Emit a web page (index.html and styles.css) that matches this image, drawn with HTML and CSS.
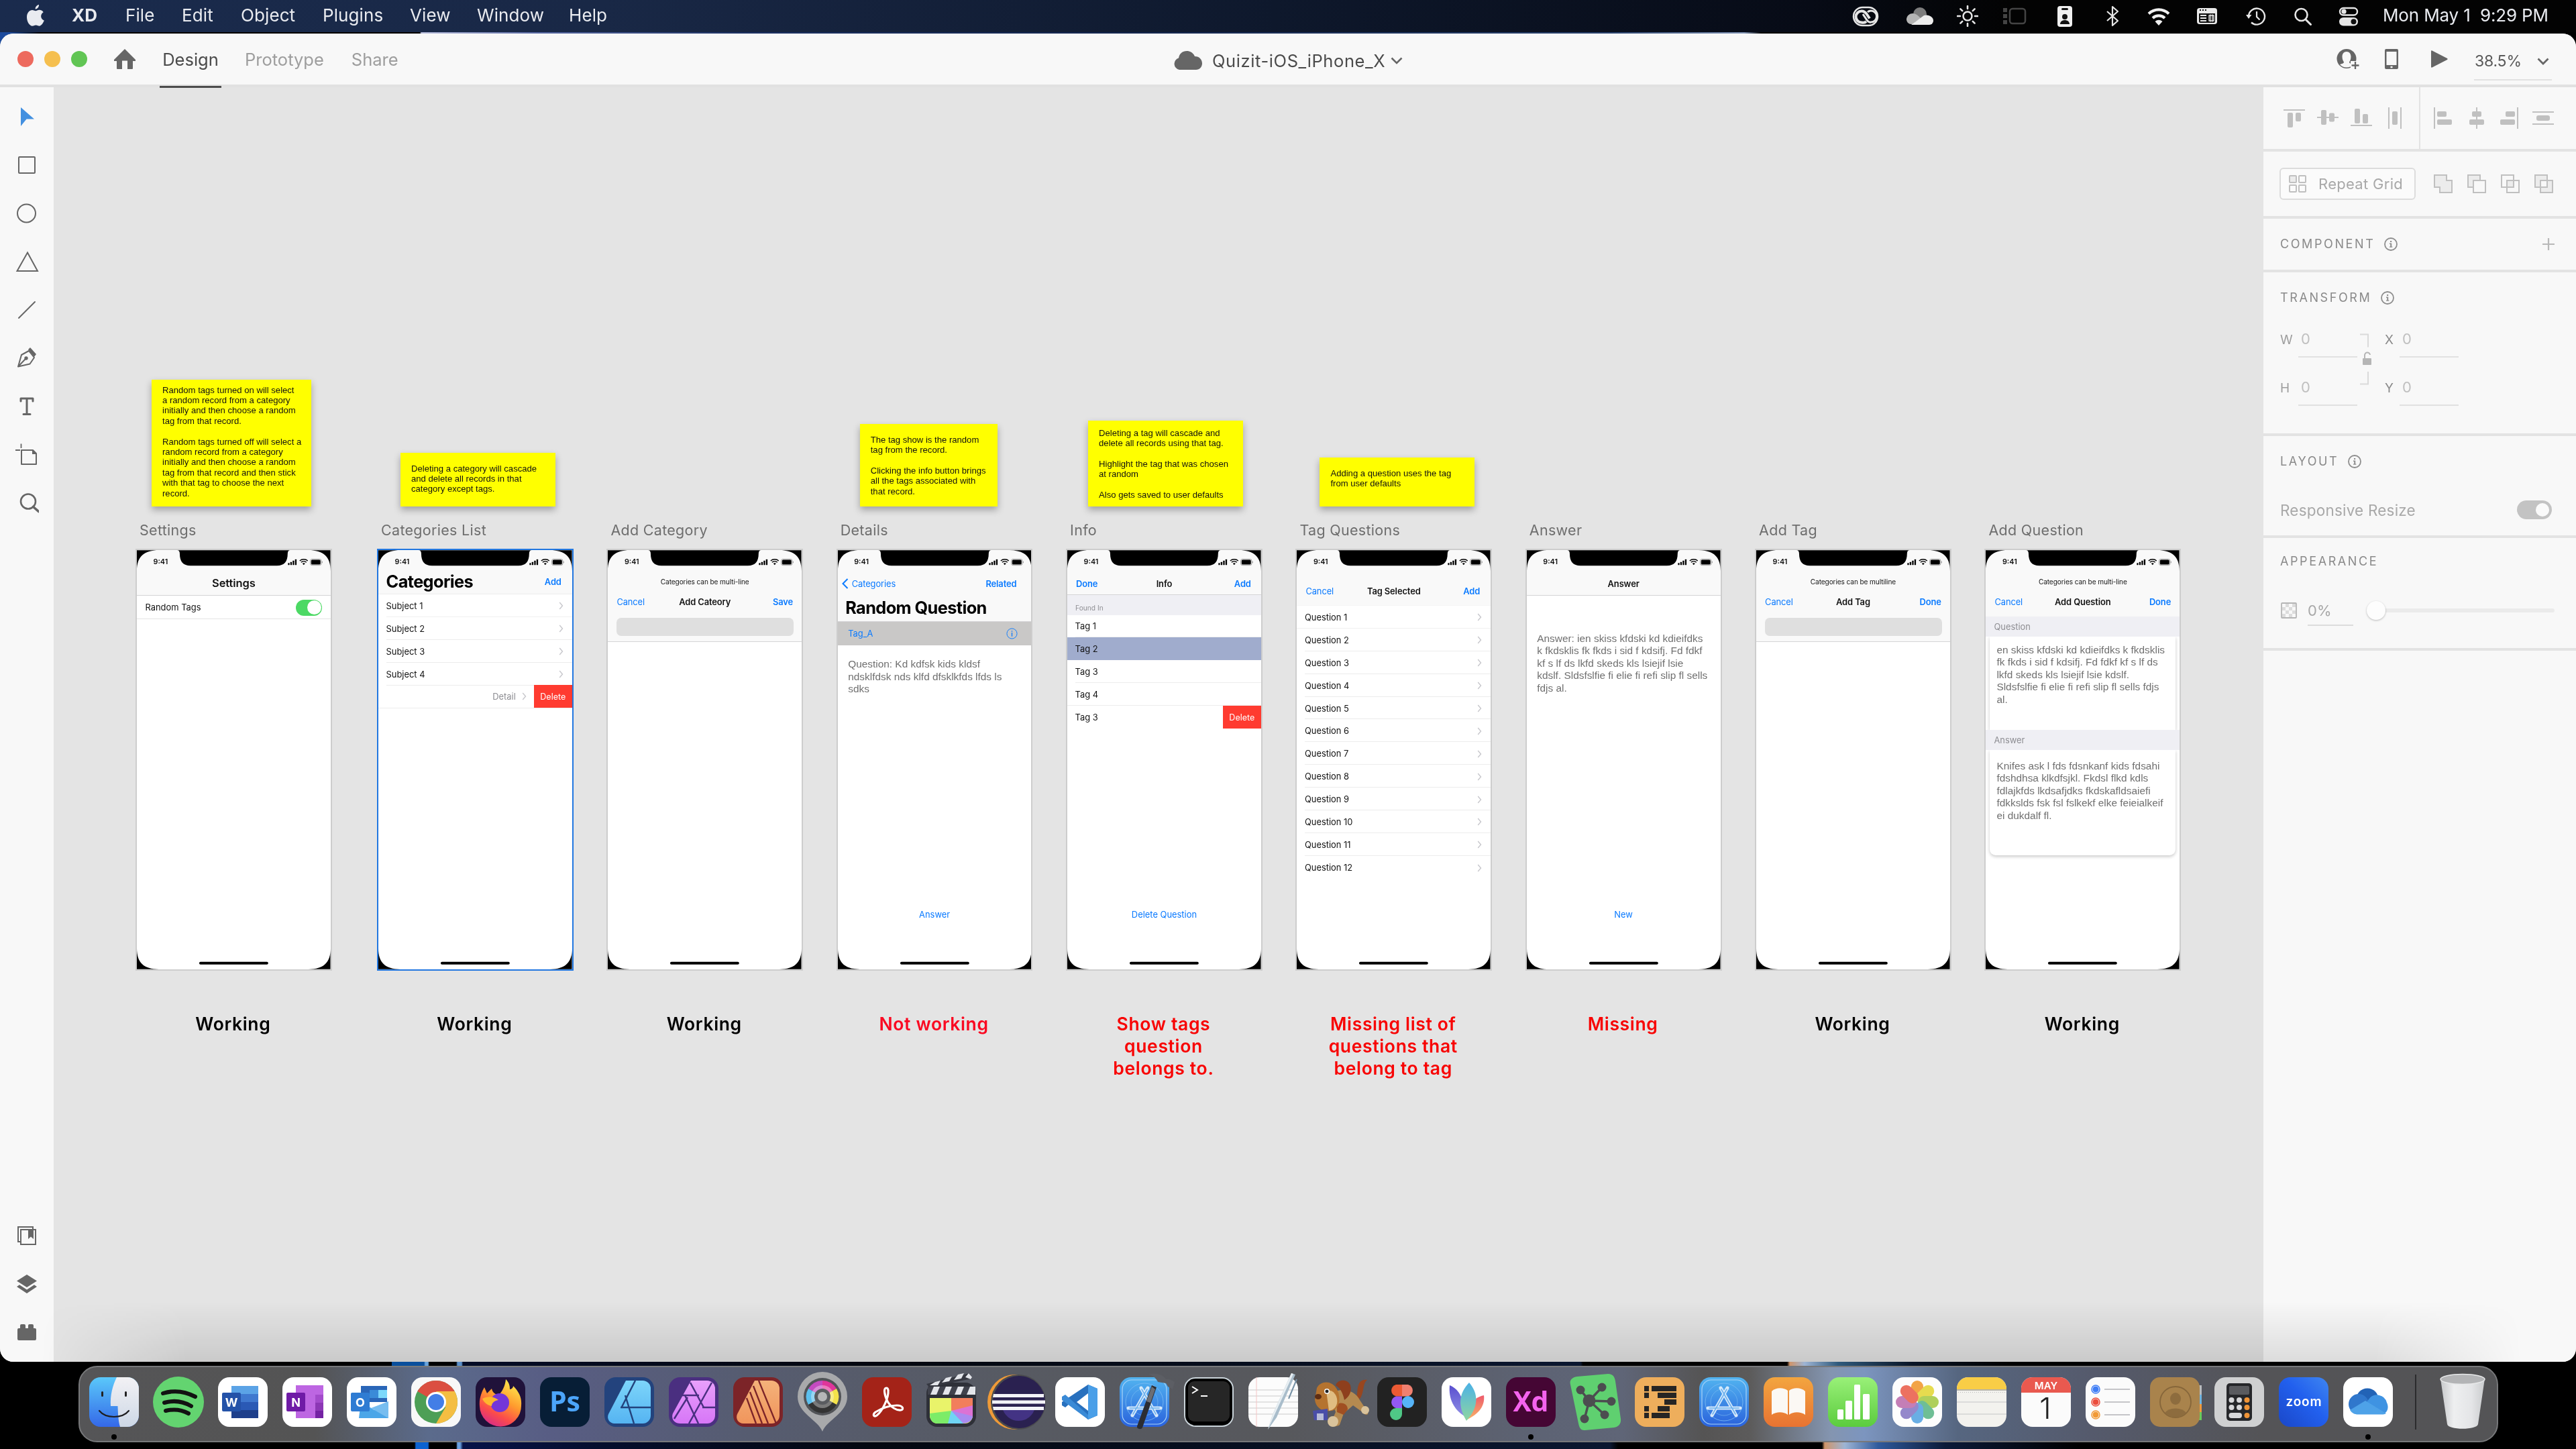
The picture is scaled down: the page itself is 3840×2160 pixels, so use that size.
FILE: index.html
```html
<!DOCTYPE html>
<html lang="en">
<head>
<meta charset="utf-8">
<title>Quizit-iOS_iPhone_X</title>
<link rel="stylesheet" href="styles.css">
</head>
<body>
<svg class="defs" width="0" height="0" aria-hidden="true">
  <defs>
    <linearGradient id="gBlue" x1="0" y1="0" x2="0" y2="1"><stop offset="0" stop-color="#5ac8fa"/><stop offset="1" stop-color="#3468e8"/></linearGradient>
    <linearGradient id="gStore" x1="0" y1="0" x2="0" y2="1"><stop offset="0" stop-color="#52b4f0"/><stop offset="1" stop-color="#2a62dc"/></linearGradient>
    <linearGradient id="gFace" x1="0" y1="0" x2="0" y2="1"><stop offset="0" stop-color="#f2f1f4"/><stop offset="1" stop-color="#cdd8e6"/></linearGradient>
    <linearGradient id="gFox" x1="0.8" y1="0" x2="0.3" y2="1"><stop offset="0" stop-color="#fff14f"/><stop offset="0.45" stop-color="#ff9a2e"/><stop offset="0.75" stop-color="#fb4b4b"/><stop offset="1" stop-color="#d62c88"/></linearGradient>
    <linearGradient id="gDesigner" x1="0" y1="0" x2="0" y2="1"><stop offset="0" stop-color="#7dd5fa"/><stop offset="1" stop-color="#55b4f2"/></linearGradient>
    <linearGradient id="gPhoto" x1="0" y1="0" x2="0" y2="1"><stop offset="0" stop-color="#e8a0fb"/><stop offset="1" stop-color="#d776f7"/></linearGradient>
    <linearGradient id="gPublish" x1="0" y1="0" x2="0" y2="1"><stop offset="0" stop-color="#f4b27a"/><stop offset="1" stop-color="#f0955c"/></linearGradient>
    <linearGradient id="gBooks" x1="0" y1="0" x2="0" y2="1"><stop offset="0" stop-color="#f3a53f"/><stop offset="1" stop-color="#e87332"/></linearGradient>
    <linearGradient id="gNumbers" x1="0" y1="0" x2="0" y2="1"><stop offset="0" stop-color="#99f078"/><stop offset="1" stop-color="#5bcc3e"/></linearGradient>
    <linearGradient id="gZoom" x1="1" y1="0" x2="0" y2="1"><stop offset="0" stop-color="#3f86f0"/><stop offset="0.45" stop-color="#2260ee"/><stop offset="1" stop-color="#1a47c8"/></linearGradient>
    <linearGradient id="gTrash" x1="0" y1="0" x2="1" y2="0"><stop offset="0" stop-color="#c6c8ca"/><stop offset="0.3" stop-color="#eeeff0"/><stop offset="0.7" stop-color="#e4e5e7"/><stop offset="1" stop-color="#c9cbcd"/></linearGradient>
    <linearGradient id="gPlant" x1="0" y1="0" x2="0" y2="1"><stop offset="0" stop-color="#4bb1e6"/><stop offset="1" stop-color="#8fd6a0"/></linearGradient>
    <linearGradient id="gPetalL" x1="0" y1="0" x2="0" y2="1"><stop offset="0" stop-color="#5a4fcf"/><stop offset="1" stop-color="#8f8ee6"/></linearGradient>
    <linearGradient id="gPetalR" x1="0" y1="0" x2="0" y2="1"><stop offset="0" stop-color="#ee5a6c"/><stop offset="1" stop-color="#f7b267"/></linearGradient>
    <symbol id="frame" viewBox="0 0 289 625">
      <path fill="#000" fill-rule="evenodd" d="M0 0H289V625H0ZM0 31V594C0 615 10 625 33 625H256C279 625 289 615 289 594V31C289 9 278 0 256 0H229Q225 0 225 5C225 17 220 23 209 23H80C69 23 64 17 64 5Q64 0 60 0H33C11 0 0 9 0 31Z"/>
      <rect x="93" y="614" width="103" height="4" rx="2" fill="#000"/>
      <g fill="#000">
        <rect x="225.500" y="19" width="2.300" height="3" rx=".6"/><rect x="229" y="17.500" width="2.300" height="4.500" rx=".6"/><rect x="232.500" y="15.500" width="2.300" height="6.500" rx=".6"/><rect x="236" y="13.500" width="2.300" height="8.500" rx=".6"/>
        <rect x="260" y="14.300" width="14" height="7" rx="1.500"/>
        <path d="M249 22l-2-2.200a3 3 0 0 1 4 0z"/>
      </g>
      <g fill="none" stroke="#000" stroke-width="1.500"><path d="M245 18a6 6 0 0 1 8 0"/><path d="M243 15.800a9 9 0 0 1 12 0"/></g>
      <rect x="258.800" y="13.200" width="16.400" height="9.200" rx="2.500" fill="none" stroke="#9a9a9a" stroke-width=".9"/>
      <path d="M276.500 16.500v2.600" stroke="#9a9a9a" stroke-width="1.200"/>
    </symbol>
    <symbol id="chev" viewBox="0 0 7 12"><path d="M1.200 1l4.300 5-4.300 5" fill="none" stroke="#c7c7cc" stroke-width="1.400"/></symbol>
    <symbol id="info" viewBox="0 0 20 20"><circle cx="10" cy="10" r="9" fill="none" stroke="#8e8e8e" stroke-width="1.800"/><path d="M9 5h2.200v2H9zM8 8.500h3.200v5H12.300v1.300H8v-1.300h1.200v-3.600H8z" fill="#8e8e8e"/></symbol>
    <symbol id="storeA" viewBox="0 0 74 74">
      <rect width="74" height="74" rx="17" fill="url(#gStore)"/>
      <rect x="4" y="4" width="66" height="66" rx="14" fill="none" stroke="#a9d4f8" stroke-width="1.200"/>
      <circle cx="37" cy="37" r="28" fill="none" stroke="#7dbdf2" stroke-width=".8"/><circle cx="37" cy="37" r="20" fill="none" stroke="#7dbdf2" stroke-width=".6"/>
      <g stroke="#e4f2fd" stroke-width="5" stroke-linecap="round" opacity=".92"><path d="M32 16L55 57M42 16L19 57M13 46H61"/></g>
      <g stroke="#6fb2ee" stroke-width="1.600" stroke-linecap="round"><path d="M33 18L54 55M41 18L20 55M15 46H59"/></g>
    </symbol>
  </defs>
</svg>

<header class="menubar">
  <nav class="menus">
    <svg class="apple" viewBox="0 0 26 32"><path fill="#e9ebf0" d="M18 0c.4 3-2.300 6.600-5.300 6.600C12.300 3.500 15.200.4 18 0zM13.200 9.300c1.300 0 3-1.500 5.500-1.500 2 0 4.600 1 6 3.400-5.300 3.200-4.400 10.200 1.100 12.400-1.400 3.700-4.300 8.100-7 8.100-2 0-2.800-1.300-5.300-1.300s-3.400 1.300-5.300 1.300C4 31.700 0 25.300 0 18.500 0 11.700 4.200 8 8 8c2.300 0 4 1.300 5.200 1.300z"/></svg>
    <b>XD</b><span>File</span><span>Edit</span><span>Object</span><span>Plugins</span><span>View</span><span>Window</span><span>Help</span>
  </nav>
  <div class="tray">
    <svg viewBox="0 0 40 32"><rect x="2" y="3" width="36" height="27" rx="13.500" fill="none" stroke="#e6e6e6" stroke-width="2.500"/><path d="M21 24c-2 2-5 2-7 1.500a8.500 8.500 0 0 1 0-17c4 0 6 2 8 5l4 6" fill="none" stroke="#e6e6e6" stroke-width="4"/><path d="M16 13l6 9c2 3 4 3.500 6 3a8.500 8.500 0 0 0 0-17c-2 0-4 1-5 2" fill="none" stroke="#e6e6e6" stroke-width="3"/></svg>
    <svg viewBox="0 0 40 32"><circle cx="20" cy="13" r="10" fill="#7d7d7d"/><path d="M0 22a9 9 0 0 1 9-10c5 0 8 3 12 7l-12 9H8a8 8 0 0 1-8-6z" fill="#b5b5b5"/><path d="M7 29L26 15c7-2 14 2 14 8a6 6 0 0 1-6 6z" fill="#ededed"/></svg>
    <svg viewBox="0 0 32 32"><circle cx="16" cy="16" r="6.500" fill="none" stroke="#e6e6e6" stroke-width="2.500"/><path d="M16 1v4M16 27v4M1 16h4M27 16h4M5.400 5.400l2.800 2.800M23.800 23.800l2.800 2.800M5.400 26.600l2.800-2.800M23.800 8.200l2.800-2.800" stroke="#e6e6e6" stroke-width="2.600" stroke-linecap="round"/></svg>
    <svg viewBox="0 0 36 32"><rect x="11" y="5" width="23" height="22" rx="4" fill="none" stroke="#444" stroke-width="2.500"/><path d="M1 4h6v6H1zM1 13h6v6H1zM1 22h6v6H1z" fill="#444"/></svg>
    <svg viewBox="0 0 22 32"><rect width="22" height="31" y="1" rx="4" fill="#f0f0f0"/><rect x="6" y="4" width="10" height="3" rx="1.500" fill="#111"/><circle cx="11" cy="17" r="4" fill="#111"/><path d="M4 28c0-8 14-8 14 0z" fill="#111"/></svg>
    <svg viewBox="0 0 20 32"><path d="M2 9l16 14-8 7V2l8 7L2 23" fill="none" stroke="#e6e6e6" stroke-width="2.200" stroke-linejoin="round"/></svg>
    <svg viewBox="0 0 34 32"><path d="M2 12.500a21.500 21.500 0 0 1 30 0M8 19a13 13 0 0 1 18 0" fill="none" stroke="#f0f0f0" stroke-width="4.200"/><path d="M17 30l-5.500-6a8 8 0 0 1 11 0z" fill="#f0f0f0"/></svg>
    <svg viewBox="0 0 30 32"><rect y="4" width="30" height="24" rx="4" fill="#e9e9e9"/><path d="M3 12h24v12a2 2 0 0 1-2 2H5a2 2 0 0 1-2-2z" fill="#111"/><path d="M4 7h2M8 7h2M12 7h2" stroke="#111" stroke-width="2.200"/><path d="M5 15h9M5 19h9M5 23h9" stroke="#e9e9e9" stroke-width="2"/><path d="M18 15h7v8h-7zM20 13.500v11M23 13.500v11" fill="none" stroke="#e9e9e9" stroke-width="1.300"/></svg>
    <svg viewBox="0 0 30 32"><path d="M4 17a12 12 0 1 1 4 8.500" fill="none" stroke="#e6e6e6" stroke-width="2.400"/><path d="M0 14h8.500L4 20z" fill="#e6e6e6"/><path d="M16 9v8l4.500 4.500" fill="none" stroke="#e6e6e6" stroke-width="2.200"/></svg>
    <svg viewBox="0 0 26 32"><circle cx="10.500" cy="14" r="9" fill="none" stroke="#e6e6e6" stroke-width="2.600"/><path d="M17 21l7.500 7.500" stroke="#e6e6e6" stroke-width="3" stroke-linecap="round"/></svg>
    <svg viewBox="0 0 30 32"><rect x="2" y="4" width="26" height="10.500" rx="5.200" fill="none" stroke="#e6e6e6" stroke-width="2.400"/><circle cx="8" cy="9.200" r="3.600" fill="#e6e6e6"/><rect x="1" y="18" width="28" height="12.500" rx="6.200" fill="#e6e6e6"/><circle cx="22.500" cy="24.200" r="4" fill="#111"/></svg>
    <span class="clock">Mon May 1&nbsp; 9:29 PM</span>
  </div>
</header>

<main class="window">
  <div class="titlebar">
    <div class="lights"><i class="close"></i><i class="min"></i><i class="max"></i></div>
    <svg class="home" viewBox="0 0 32 30"><path d="M16 0L32 16V18H28V29a1 1 0 0 1-1 1H20V17.500H12V30H5a1 1 0 0 1-1-1V18H0V16z" fill="#666"/></svg>
    <div class="tabs"><span class="on">Design</span><span>Prototype</span><span>Share</span></div>
    <div class="doc">
      <svg width="44" height="30" viewBox="0 0 44 30"><path d="M9 29a9 9 0 0 1-1-17.500C9 5 14 1 20 1c6 0 10 3.500 12 8 7 0 11 5 11 10.500C43 25 39 29 34 29z" fill="#666"/></svg>
      <span>Quizit-iOS_iPhone_X</span>
      <svg width="18" height="11" viewBox="0 0 18 11"><path d="M1.500 1.500L9 9l7.500-7.500" fill="none" stroke="#666" stroke-width="2.600"/></svg>
    </div>
    <div class="actions">
      <svg width="34" height="32" viewBox="0 0 34 32"><circle cx="15" cy="15.500" r="14.500" fill="#666"/><path d="M15 5c4 0 6.500 3 6.500 7.500 0 4-1.500 6.500-2.500 8 0 2 3 2.500 6 3.500-5 6-15 6-20 0 3-1 6-1.500 6-3.500-1-1.500-2.500-4-2.500-8C8.500 8 11 5 15 5z" fill="#f8f8f8"/><path d="M21 19h13v13H21z" fill="#f8f8f8"/><path d="M28 20v11M22.500 25.500h11" stroke="#666" stroke-width="2.300"/></svg>
      <svg width="20" height="32" viewBox="0 0 20 32"><path fill="#666" fill-rule="evenodd" d="M2 1h16a2 2 0 0 1 2 2v26a2 2 0 0 1-2 2H2a2 2 0 0 1-2-2V3a2 2 0 0 1 2-2zM2.500 5v20h15V5zM8.500 26.800v2.400h3v-2.400z"/></svg>
      <svg width="26" height="28" viewBox="0 0 26 28"><path d="M0 2.500Q0 .8 1.600 1.600L24 13q1.500 1 0 2L1.600 26.400Q0 27.200 0 25.500z" fill="#666"/></svg>
      <div class="zoomer"><span>38.5%</span><svg width="18" height="11" viewBox="0 0 18 11"><path d="M1.500 1.500L9 9l7.500-7.500" fill="none" stroke="#666" stroke-width="2.800"/></svg></div>
    </div>
  </div>

  <div class="work">
    <aside class="tools">
      <div class="toolset">
        <svg viewBox="0 0 36 36"><path d="M9 4l20 17.500H17.500L9 32z" fill="#4390e0"/></svg>
        <svg viewBox="0 0 36 36"><rect x="6" y="6" width="24" height="24" rx="1" fill="none" stroke="#666" stroke-width="2"/></svg>
        <svg viewBox="0 0 36 36"><circle cx="17.500" cy="18" r="13.500" fill="none" stroke="#666" stroke-width="2"/></svg>
        <svg viewBox="0 0 36 36"><path d="M19 4.500L34 32H3.500z" fill="none" stroke="#666" stroke-width="2"/></svg>
        <svg viewBox="0 0 36 36"><path d="M6 30L30 6" stroke="#666" stroke-width="2" stroke-linecap="round"/></svg>
        <svg viewBox="0 0 36 36"><path d="M5 30.500L10 13 21 7l8 10-6.500 9.500zM5 30.500L16 19" fill="none" stroke="#666" stroke-width="2" stroke-linejoin="round"/><circle cx="17" cy="18" r="2.700" fill="#666"/><path d="M20 5l3-3 9 10-3 4z" fill="#666"/></svg>
        <svg viewBox="0 0 36 36"><path d="M9 10V6h18v4M18 6v23M13 29.500h10" fill="none" stroke="#666" stroke-width="3" stroke-linecap="round" stroke-linejoin="round"/></svg>
        <svg viewBox="0 0 36 36"><path d="M10 11h17l5 5v16H10z" fill="none" stroke="#666" stroke-width="2" stroke-linejoin="round"/><path d="M26 10l7 7h-7z" fill="#666"/><path d="M1 11h7M9.500 1.500v6.500" stroke="#666" stroke-width="1.800"/></svg>
        <svg viewBox="0 0 36 36"><circle cx="20" cy="15.500" r="11" fill="none" stroke="#666" stroke-width="2.600"/><path d="M27.500 23.500l8 7" stroke="#666" stroke-width="3.600" stroke-linecap="round"/></svg>
      </div>
      <div class="toolset">
        <svg viewBox="0 0 36 36"><path d="M9 27H5V5h22v4" fill="none" stroke="#666" stroke-width="2"/><rect x="9" y="9" width="22" height="22" fill="none" stroke="#666" stroke-width="2"/><path d="M20 9h8v14l-4-3.500-4 3.500z" fill="#666"/></svg>
        <svg viewBox="0 0 36 36"><path d="M18 4l15 9.500L18 23 3 13.500z" fill="#666"/><path d="M3 22l4-2.700 11 7.200 11-7.200 4 2.700-15 10z" fill="#666"/></svg>
        <svg viewBox="0 0 36 36"><path d="M6 12h2V8a2 2 0 0 1 2-2h4a2 2 0 0 1 2 2v4h4V8a2 2 0 0 1 2-2h4a2 2 0 0 1 2 2v4h2a2 2 0 0 1 2 2v14a2 2 0 0 1-2 2H6a2 2 0 0 1-2-2V14a2 2 0 0 1 2-2z" fill="#666"/></svg>
      </div>
    </aside>

    <section class="canvas">
      <article class="board first">
        <div class="slot"><p class="note n1">Random tags turned on will select<br>a random record from a category<br>initially and then choose a random<br>tag from that record.<br><br>Random tags turned off will select a<br>random record from a category<br>initially and then choose a random<br>tag from that record and then stick<br>with that tag to choose the next<br>record.</p></div>
        <h2>Settings</h2>
        <div class="phone">
          <div class="head h68"><time>9:41</time><div class="bar b30 big">Settings</div></div>
          <div class="row toggle-row"><span>Random Tags</span><i class="switch"></i></div>
          <svg class="over"><use href="#frame"/></svg>
        </div>
        <p class="state">Working</p>
      </article>

      <article class="board">
        <div class="slot"><p class="note n2">Deleting a category will cascade<br>and delete all records in that<br>category except tags.</p></div>
        <h2>Categories List</h2>
        <div class="phone picked">
          <div class="head h66"><time>9:41</time><div class="bar b26 split"><strong>Categories</strong><b class="act">Add</b></div></div>
          <ul class="list">
            <li>Subject 1<svg><use href="#chev"/></svg></li><li>Subject 2<svg><use href="#chev"/></svg></li><li>Subject 3<svg><use href="#chev"/></svg></li><li>Subject 4<svg><use href="#chev"/></svg></li>
          </ul>
          <div class="swipe detail"><span>Detail</span><svg><use href="#chev"/></svg><em>Delete</em></div>
          <svg class="over"><use href="#frame"/></svg>
        </div>
        <p class="state">Working</p>
      </article>

      <article class="board">
        <div class="slot"></div>
        <h2>Add Category</h2>
        <div class="phone">
          <div class="head h136"><time>9:41</time><small>Categories can be multi-line</small><div class="bar b34 tri"><span>Cancel</span><b>Add Cateory</b><b class="act">Save</b></div><i class="field"></i></div>
          <svg class="over"><use href="#frame"/></svg>
        </div>
        <p class="state">Working</p>
      </article>

      <article class="board">
        <div class="slot"><p class="note n3">The tag show is the random<br>tag from the record.<br><br>Clicking the info button brings<br>all the tags associated with<br>that record.</p></div>
        <h2>Details</h2>
        <div class="phone">
          <div class="head h107"><time>9:41</time><div class="bar b32 back"><svg viewBox="0 0 10 16"><path d="M8.500 1L1.500 8l7 7" fill="none" stroke="#0a7aff" stroke-width="2"/></svg><span>Categories</span><b class="act">Related</b></div><strong class="large">Random Question</strong></div>
          <div class="tagrow"><span>Tag_A</span><svg viewBox="0 0 18 18"><circle cx="9" cy="9" r="8" fill="none" stroke="#0a7aff"/><path d="M9 4.500v1.500M9 7.500v6" stroke="#0a7aff" stroke-width="1.400"/></svg></div>
          <p class="body t20">Question: Kd kdfsk kids kldsf<br>ndsklfdsk nds klfd dfsklkfds lfds ls<br>sdks</p>
          <a>Answer</a>
          <svg class="over"><use href="#frame"/></svg>
        </div>
        <p class="state bad alt">Not working</p>
      </article>

      <article class="board">
        <div class="slot"><p class="note n4">Deleting a tag will cascade and<br>delete all records using that tag.<br><br>Highlight the tag that was chosen<br>at random<br><br>Also gets saved to user defaults</p></div>
        <h2>Info</h2>
        <div class="phone">
          <div class="head h67"><time>9:41</time><div class="bar b32 tri"><b class="act">Done</b><b>Info</b><b class="act">Add</b></div></div>
          <div class="group found">Found In</div>
          <ul class="list tags"><li>Tag 1</li><li class="sel">Tag 2</li><li>Tag 3</li><li class="full">Tag 4</li></ul>
          <div class="swipe tag5"><span>Tag 3</span><em>Delete</em></div>
          <a>Delete Question</a>
          <svg class="over"><use href="#frame"/></svg>
        </div>
        <p class="state bad">Show tags<br>question<br>belongs to.</p>
      </article>

      <article class="board">
        <div class="slot"><p class="note n5">Adding a question uses the tag<br>from user defaults</p></div>
        <h2>Tag Questions</h2>
        <div class="phone">
          <div class="head h82"><time>9:41</time><div class="bar b42 tri"><span>Cancel</span><b>Tag Selected</b><b class="act">Add</b></div></div>
          <ul class="list">
            <li class="full">Question 1<svg><use href="#chev"/></svg></li><li>Question 2<svg><use href="#chev"/></svg></li><li>Question 3<svg><use href="#chev"/></svg></li><li>Question 4<svg><use href="#chev"/></svg></li><li>Question 5<svg><use href="#chev"/></svg></li><li>Question 6<svg><use href="#chev"/></svg></li><li>Question 7<svg><use href="#chev"/></svg></li><li>Question 8<svg><use href="#chev"/></svg></li><li>Question 9<svg><use href="#chev"/></svg></li><li>Question 10<svg><use href="#chev"/></svg></li><li>Question 11<svg><use href="#chev"/></svg></li><li class="last">Question 12<svg><use href="#chev"/></svg></li>
          </ul>
          <svg class="over"><use href="#frame"/></svg>
        </div>
        <p class="state bad">Missing list of<br>questions that<br>belong to tag</p>
      </article>

      <article class="board">
        <div class="slot"></div>
        <h2>Answer</h2>
        <div class="phone">
          <div class="head h68"><time>9:41</time><div class="bar b32 mid"><b>Answer</b></div></div>
          <p class="body t54">Answer: ien skiss kfdski kd kdieifdks<br>k fkdsklis fk fkds i sid f kdsifj. Fd fdkf<br>kf s lf ds lkfd skeds kls lsiejif lsie<br>kdslf. Sldsfslfie fi elie fi refi slip fl sells<br>fdjs al.</p>
          <a>New</a>
          <svg class="over"><use href="#frame"/></svg>
        </div>
        <p class="state bad">Missing</p>
      </article>

      <article class="board">
        <div class="slot"></div>
        <h2>Add Tag</h2>
        <div class="phone">
          <div class="head h136"><time>9:41</time><small>Categories can be multiline</small><div class="bar b34 tri"><span>Cancel</span><b>Add Tag</b><b class="act">Done</b></div><i class="field"></i></div>
          <svg class="over"><use href="#frame"/></svg>
        </div>
        <p class="state">Working</p>
      </article>

      <article class="board">
        <div class="slot"></div>
        <h2>Add Question</h2>
        <div class="phone">
          <div class="head h99"><time>9:41</time><small>Categories can be multi-line</small><div class="bar b34 tri"><span>Cancel</span><b>Add Question</b><b class="act">Done</b></div></div>
          <div class="group">Question</div>
          <p class="body card c1">en skiss kfdski kd kdieifdks k fkdsklis<br>fk fkds i sid f kdsifj. Fd fdkf kf s lf ds<br>lkfd skeds kls lsiejif lsie kdslf.<br>Sldsfslfie fi elie fi refi slip fl sells fdjs<br>al.</p>
          <div class="group">Answer</div>
          <p class="body card c2">Knifes ask l fds fdsnkanf kids fdsahi<br>fdshdhsa klkdfsjkl. Fkdsl flkd kdls<br>fdlajkfds lkdsafjdks fkdskafldsaiefi<br>fdkkslds fsk fsl fslkekf elke feieialkeif<br>ei dukdalf fl.</p>
          <svg class="over"><use href="#frame"/></svg>
        </div>
        <p class="state">Working</p>
      </article>
    </section>

    <aside class="panel">
      <section class="align">
        <div class="alignset">
          <svg viewBox="0 0 32 32"><path d="M0 4h32" stroke="#c0c0c0" stroke-width="2"/><rect x="6" y="8" width="8" height="22" rx="2"/><rect x="18" y="8" width="8" height="13" rx="2"/></svg>
          <svg viewBox="0 0 32 32"><path d="M0 15h32" stroke="#c0c0c0" stroke-width="2"/><rect x="6" y="4" width="8" height="22" rx="2"/><rect x="18" y="8.500" width="8" height="13" rx="2"/></svg>
          <svg viewBox="0 0 32 32"><path d="M0 27h32" stroke="#c0c0c0" stroke-width="2"/><rect x="6" y="2" width="8" height="22" rx="2"/><rect x="18" y="10" width="8" height="14" rx="2"/></svg>
          <svg viewBox="0 0 32 32"><path d="M7 0v32M25 0v32" stroke="#c0c0c0" stroke-width="2"/><rect x="12" y="6" width="8" height="20" rx="2"/></svg>
        </div>
        <div class="alignset right">
          <svg viewBox="0 0 32 32"><path d="M3 0v32" stroke="#c0c0c0" stroke-width="2"/><rect x="7" y="6" width="14" height="8" rx="2"/><rect x="7" y="18" width="22" height="8" rx="2"/></svg>
          <svg viewBox="0 0 32 32"><path d="M16 0v32" stroke="#c0c0c0" stroke-width="2"/><rect x="9" y="6" width="14" height="8" rx="2"/><rect x="5" y="18" width="22" height="8" rx="2"/></svg>
          <svg viewBox="0 0 32 32"><path d="M28 0v32" stroke="#c0c0c0" stroke-width="2"/><rect x="10" y="6" width="14" height="8" rx="2"/><rect x="2" y="18" width="22" height="8" rx="2"/></svg>
          <svg viewBox="0 0 32 32"><path d="M0 7h32M0 25h32" stroke="#c0c0c0" stroke-width="2"/><rect x="6" y="12" width="20" height="8" rx="3"/></svg>
        </div>
      </section>
      <section class="repeat">
        <button><svg width="26" height="26" viewBox="0 0 26 26" fill="none" stroke="#c0c0c0" stroke-width="2"><rect x="1" y="1" width="10" height="10" rx="1" fill="#ececec"/><rect x="15" y="1" width="10" height="10" rx="1"/><rect x="1" y="15" width="10" height="10" rx="1"/><rect x="15" y="15" width="10" height="10" rx="1"/></svg>Repeat Grid</button>
        <div class="bools">
          <svg viewBox="0 0 28 28"><path d="M1 1h18v8h8v18H9v-8H1z" fill="#ececec"/></svg>
          <svg viewBox="0 0 28 28"><path d="M1 1h18v18H1z" fill="#ececec"/><path d="M9 9h18v18H9z" fill="#f8f8f8"/></svg>
          <svg viewBox="0 0 28 28"><path d="M1 1h18v18H1zM9 9h18v18H9z" fill="none"/><path d="M9 9h10v10H9z" fill="#ececec"/></svg>
          <svg viewBox="0 0 28 28"><path d="M1 1h18v18H1zM9 9h18v18H9z" fill="#ececec"/><path d="M9 9h10v10H9z" fill="#f8f8f8"/></svg>
        </div>
      </section>
      <section class="component"><h3>COMPONENT<svg><use href="#info"/></svg></h3><svg width="18" height="18" viewBox="0 0 18 18"><path d="M0 9h18M9 0v18" stroke="#b8b8b8" stroke-width="2.200"/></svg></section>
      <section class="transform">
        <h3>TRANSFORM<svg><use href="#info"/></svg></h3>
        <div class="fields">
          <div class="pair"><label>W</label><span>0</span><label>H</label><span>0</span></div>
          <svg class="lock" viewBox="0 0 18 78"><path d="M0 1.500h12v19M0 75.500h12V57" fill="none" stroke="#dadada" stroke-width="2"/><rect x="4" y="37" width="13" height="10" rx="1" fill="#b5b5b5"/><path d="M7 37v-4a4 4 0 0 1 8-1" fill="none" stroke="#b5b5b5" stroke-width="2"/></svg>
          <div class="pair dark"><label>X</label><span>0</span><label>Y</label><span>0</span></div>
        </div>
      </section>
      <section class="layout"><h3>LAYOUT<svg><use href="#info"/></svg></h3><div class="resp"><span>Responsive Resize</span><i></i></div></section>
      <section class="look">
        <h3>APPEARANCE</h3>
        <div class="opacity"><svg width="24" height="24" viewBox="0 0 24 24"><path d="M7 2h5v5H7zM17 2h5v5h-5zM2 7h5v5H2zM12 7h5v5h-5zM7 12h5v5H7zM17 12h5v5h-5zM2 17h5v5H2zM12 17h5v5h-5z" fill="#dcdcdc"/><rect x="1" y="1" width="22" height="22" rx="1" fill="none" stroke="#b5b5b5" stroke-width="1.800"/></svg><span>0%</span><div class="slider"><i></i></div></div>
      </section>
    </aside>
  </div>
</main>

<footer class="dock">
  <div class="app run"><svg viewBox="0 0 74 74"><rect width="74" height="74" rx="17" fill="url(#gBlue)"/><path d="M41 0H57A17 17 0 0 1 74 17V57A17 17 0 0 1 57 74H46C43 64 43 52 42.500 43H32C31 27 35 12 41 0z" fill="url(#gFace)"/><path d="M19.500 22.500v5M54.500 22.500v5" stroke="#222" stroke-width="3" stroke-linecap="round"/><path d="M15 50c10 12 34 12 44 0" fill="none" stroke="#1d1d1f" stroke-width="2.200" stroke-linecap="round"/></svg></div>
  <div class="app"><svg viewBox="0 0 74 74"><circle cx="37" cy="37" r="38" fill="#63d470"/><path d="M14 24c16-5 33-3 48 5M16 38c14-4 28-2 40 5M18 50c12-3 23-2 34 4" fill="none" stroke="#121212" stroke-width="6" stroke-linecap="round"/></svg></div>
  <div class="app"><svg viewBox="0 0 74 74"><rect width="74" height="74" rx="17" fill="#fff"/><path d="M20 13h40v12H20z" fill="#5ba3e6"/><path d="M20 25h40v12H20z" fill="#3f78cf"/><path d="M20 37h40v12H20z" fill="#2a59b5"/><path d="M20 49h40v12H20z" fill="#1e3f8b"/><rect x="6" y="23" width="28" height="28" rx="2" fill="#2452a8"/><text x="20" y="44" class="ms">W</text></svg></div>
  <div class="app"><svg viewBox="0 0 74 74"><rect width="74" height="74" rx="17" fill="#fff"/><path d="M20 12h41v49H20z" fill="#bd66e2"/><path d="M49 26h12v12H49z" fill="#a34bcb"/><path d="M49 38h12v12H49z" fill="#8c37b5"/><path d="M49 50h12v11H49z" fill="#7422a3"/><rect x="6" y="23" width="28" height="28" rx="2" fill="#6f1ba6"/><text x="20" y="44" class="ms">N</text></svg></div>
  <div class="app"><svg viewBox="0 0 74 74"><rect width="74" height="74" rx="17" fill="#fff"/><path d="M21 13h39v24H21z" fill="#2a66b8"/><path d="M34 19h13v12H34z" fill="#3a8bd8"/><path d="M47 19h13v12H47z" fill="#7cd8fb"/><path d="M21 36l20 13 21-13v25H18z" fill="#4ba6e8"/><path d="M62 36v25L36 46z" fill="#77bdf0"/><rect x="6" y="23" width="28" height="28" rx="2" fill="#2f7cd3"/><text x="20" y="44" class="ms">O</text></svg></div>
  <div class="app"><svg viewBox="0 0 74 74"><rect width="74" height="74" rx="17" fill="#f8f8f8"/><circle cx="37" cy="37" r="32" fill="#4d9f56"/><path d="M37 37L9.300 21A32 32 0 0 1 64.700 21z" fill="#db4f41"/><path d="M37 21H64.700A32 32 0 0 1 37 69L51 45z" fill="#f4be42"/><circle cx="37" cy="37" r="15" fill="#fff"/><circle cx="37" cy="37" r="12" fill="#437ee6"/></svg></div>
  <div class="app"><svg viewBox="0 0 74 74"><rect width="74" height="74" rx="17" fill="#20123a"/><path d="M45 3c6 6 6 12 6 15 4-1 5-3 5-5 9 9 13 18 12 29A31 31 0 0 1 6 43C5 32 9 22 13 15l4 9 7-7c1 5 4 8 10 10 6-6 10-14 11-24z" fill="url(#gFox)"/><circle cx="36" cy="38" r="14" fill="#7436d8"/><path d="M10 32c8-4 17-4 24 2-7 1-10 5-10 9-5-1-11-4-14-11z" fill="#ffb62e"/></svg></div>
  <div class="app"><svg viewBox="0 0 74 74"><rect width="74" height="74" rx="17" fill="#071e36"/><text x="37" y="51" class="adobe" fill="#4ca5fa" textLength="46">Ps</text></svg></div>
  <div class="app"><svg viewBox="0 0 74 74"><rect width="74" height="74" rx="17" fill="#23437d"/><path d="M32 5H57A12 12 0 0 1 69 17V57A12 12 0 0 1 57 69H15C8 69 3 62 6 55z" fill="url(#gDesigner)"/><path d="M46 5L25 46M31 27L44 69M24 45H69" fill="none" stroke="#23437d" stroke-width="2.500"/></svg></div>
  <div class="app"><svg viewBox="0 0 74 74"><rect width="74" height="74" rx="17" fill="#4a2f80"/><path d="M33 5H57A12 12 0 0 1 69 17V57A12 12 0 0 1 57 69H17C8 69 3 62 6 54z" fill="url(#gPhoto)"/><path d="M64 8L30 69M32 8L52 45M20 27H45M50 45H69M24 27L44 69M28 30L8 62" fill="none" stroke="#4a2f80" stroke-width="2.500"/></svg></div>
  <div class="app"><svg viewBox="0 0 74 74"><rect width="74" height="74" rx="17" fill="#7c2428"/><path d="M32 5H57A12 12 0 0 1 69 17V57A12 12 0 0 1 57 69H15C8 69 3 62 6 55z" fill="url(#gPublish)"/><path d="M38 5L64 69M30 13L52 69M25 22L43 69M20 31L34 69" stroke="#7c2428" stroke-width="2.300"/></svg></div>
  <div class="app"><svg viewBox="0 0 74 74"><path d="M37 81C31 64 0 54 0 29A37 37 0 0 1 74 29C74 54 43 64 37 81z" fill="#a8a9ab"/><circle cx="37" cy="29" r="28" fill="#515357"/><path d="M37 29V5A24 24 0 0 1 58 17z" fill="#e0359a"/><path d="M37 29V5A24 24 0 0 0 16 17z" fill="#c44bc0"/><path d="M37 29L58 17A24 24 0 0 1 58 41z" fill="#f4e24a"/><path d="M37 29L16 17A24 24 0 0 0 16 41z" fill="#5cc0ee"/><path d="M37 29L58 41A24 24 0 0 1 16 41z" fill="#333"/><circle cx="37" cy="29" r="17" fill="#fff" opacity=".35"/><circle cx="37" cy="29" r="12" fill="#5a5c60"/><circle cx="37" cy="29" r="7" fill="#b5b6b8"/></svg></div>
  <div class="app"><svg viewBox="0 0 74 74"><rect width="74" height="74" rx="17" fill="#a42318"/><path d="M36 16c-4 0-3 10 2 20 5 9 14 14 20 13 5-1 3-7-6-7-12 0-24 5-32 10-5 4-2 8 2 5 8-6 18-26 17-37 0-3-1-4-3-4z" fill="none" stroke="#fff" stroke-width="3.200" stroke-linejoin="round"/></svg></div>
  <div class="app"><svg viewBox="0 0 74 74"><rect y="8" width="74" height="66" rx="16" fill="#2e3038"/><path d="M5 31H69V56A12 12 0 0 1 57 69H17A12 12 0 0 1 5 56z" fill="#e9f36a"/><path d="M37 50V31H69V46z" fill="#f27e5c"/><path d="M37 50L69 42V60z" fill="#dc72d4"/><path d="M37 50L69 58C68 66 62 69 50 69z" fill="#a98bf0"/><path d="M37 50L55 69H30z" fill="#6fd4f4"/><path d="M37 50L32 69H17C9 69 5 64 5 54z" fill="#7cec68"/><path d="M2 14h70v12H2z" fill="#40424c"/><path d="M6 26l5-12h9l-5 12zM24 26l5-12h9l-5 12zM42 26l5-12h9l-5 12zM60 26l5-12h8v12z" fill="#e3e5ea"/><path d="M0 10L64-6 68 2 4 15z" fill="#363841"/><path d="M5 12l8-5 8-2-4 7zM23 8l6-7 9-2-4 7zM41 4l6-8 9-2-4 8zM58 0l5-6 5 6-2 3z" fill="#e3e5ea"/></svg></div>
  <div class="app"><svg viewBox="0 0 74 74"><circle cx="36" cy="37" r="41" fill="#ef9a38"/><circle cx="41" cy="37" r="41" fill="#4a4b4e"/><circle cx="42" cy="37" r="39" fill="#2a2150"/><path d="M17 45H66A25 25 0 0 1 17 45z" fill="#433384"/><path d="M4 25H79V30H3zM2 34.500H81V39.500H2zM3 44H79V49H4z" fill="#f3f3f8"/></svg></div>
  <div class="app"><svg viewBox="0 0 74 74"><rect width="74" height="74" rx="17" fill="#fff"/><path d="M49 11l14 6v40l-14 6L23 38l-8 7-5-3v-5l39-26z" fill="#2870be"/><path d="M49 24L32 37l17 13z" fill="#fff"/><path d="M10 29l5-3 34 30v7L10 34z" fill="#3a8ad6"/><path d="M49 11l14 6v40l-14 6z" fill="#4a9fe8"/></svg></div>
  <div class="app"><svg viewBox="0 0 74 74"><use href="#storeA" width="74" height="74"/><path d="M55 15L34 75C32 79 25 77 26 73L48 12z" fill="#2b2d33"/><path d="M53 18L46 38l-6-2 8-22z" fill="#6b6e75"/><path d="M43-5c14-2 22 2 26 8l5 0 8 4-3 11-7-4-3-5-12-2c-2-5-7-9-14-12z" fill="#5c5e64"/></svg></div>
  <div class="app"><svg viewBox="0 0 74 74"><rect width="74" height="74" rx="17" fill="#c9d3d9"/><rect x="2" y="2" width="70" height="70" rx="15" fill="#000"/><rect x="6" y="6" width="62" height="60" rx="9" fill="#262626"/><path d="M12 14l8 5-8 5" fill="none" stroke="#fff" stroke-width="2"/><path d="M25 28h10" stroke="#fff" stroke-width="2"/></svg></div>
  <div class="app"><svg viewBox="0 0 74 74"><rect width="74" height="74" rx="17" fill="#fcfcfc"/><path d="M0 19h74M0 28h74M0 37h74M0 46h74M0 55h74" stroke="#c9c9c9" stroke-width="1.200"/><path d="M12 0v74" stroke="#f4c5c5"/><path d="M64-6l6 2L42 60l-13 18 7-22z" fill="#a9bdcb"/><path d="M64-6l3 1L38 58l-9 20 7-22z" fill="#e7eef2"/><path d="M72 3L60 32" stroke="#7590a4" stroke-width="2"/></svg></div>
  <div class="app"><svg viewBox="0 0 74 74"><path d="M60 40c8-10 5-20 8-28 2-7 8-9 13-8-7 6-4 16-10 27z" fill="#98461f"/><path d="M25 26C40 14 62 18 70 34l12 18c2 6-6 4-8 0L60 42 46 54l-6 17c-5 4-14 2-13-3l7-16z" fill="#b58a50"/><path d="M36 40c8-4 16 0 16 8l-6 8-10-4z" fill="#a04f22"/><path d="M6 16C12 5 28 4 36 18c7 14 3 30-8 32C14 52 5 46 3 34z" fill="#b5732f"/><path d="M20 20c6-2 14 2 16 12s-4 17-12 18z" fill="#e0bd82"/><path d="M34 12c3-9 18-10 22 0 3 10-3 18-9 22-2-10-6-18-13-22z" fill="#8e3f1d"/><circle cx="21" cy="21" r="4" fill="#fff"/><circle cx="21" cy="21" r="2.500" fill="#222"/><ellipse cx="8" cy="29" rx="5" ry="4" fill="#5f2d12"/><path d="M0 50l22-3v17H2z" fill="#4a4ea8"/><path d="M6 54h10v10H6z" fill="#b9bdd8"/><circle cx="30" cy="66" r="8" fill="#d9c39c"/><circle cx="78" cy="49" r="6" fill="#d9c39c"/></svg></div>
  <div class="app"><svg viewBox="0 0 74 74"><rect width="74" height="74" rx="17" fill="#222"/><path d="M37 11H28a9 9 0 0 0 0 17.500h9z" fill="#ec5a34"/><path d="M37 11H46a9 9 0 0 1 0 17.500h-9z" fill="#f08070"/><path d="M37 28.500H28a9 9 0 0 0 0 17.500h9z" fill="#9458f5"/><circle cx="46" cy="37" r="9" fill="#56b4f8"/><path d="M37 46H28a9 9 0 1 0 9 9z" fill="#4fc886"/></svg></div>
  <div class="app"><svg viewBox="0 0 74 74"><rect width="74" height="74" rx="17" fill="#fff"/><path d="M12 12c15 6 22 22 22 46C18 48 10 32 12 12z" fill="url(#gPetalL)"/><path d="M63 27c2 16-8 28-25 36-1-18 7-32 25-36z" fill="url(#gPetalR)"/><path d="M41 8c14 16 15 36-4 57-13-22-12-40 4-57z" fill="url(#gPlant)"/></svg></div>
  <div class="app run"><svg viewBox="0 0 74 74"><rect width="74" height="74" rx="17" fill="#450634"/><text x="37" y="51" class="adobe" fill="#f463ee" textLength="53">Xd</text></svg></div>
  <div class="app"><svg viewBox="0 0 74 74"><path d="M10-1L56-5C64-5 66 0 67 6L75 62C76 70 71 74 65 75L22 79C15 80 13 74 12 69L0 11C-2 4 3 0 10-1z" fill="#5fd070"/><path d="M15 19L28 35 47 15M28 35L60 36M28 35L21 62M28 35L51 56" fill="none" stroke="#4c4d50" stroke-width="3.500"/><g fill="#4c4d50"><circle cx="15" cy="19" r="6.500"/><circle cx="47" cy="15" r="6.500"/><circle cx="61" cy="36" r="6.500"/><circle cx="21" cy="62" r="6.500"/><circle cx="51" cy="56" r="6.500"/><circle cx="28" cy="35" r="9.500"/></g></svg></div>
  <div class="app"><svg viewBox="0 0 74 74"><rect width="74" height="74" rx="17" fill="#eeae5c"/><path d="M14 13h7v8h-7zM25 13h37v8H25zM14 23h7v8h-7zM34 23h28v8H34zM44 33h18v8H44zM14 43h7v8h-7zM34 43h18v8H34zM14 53h7v8h-7zM25 53h27v8H25z" fill="#262524"/></svg></div>
  <div class="app"><svg viewBox="0 0 74 74"><use href="#storeA" width="74" height="74"/></svg></div>
  <div class="app"><svg viewBox="0 0 74 74"><rect width="74" height="74" rx="17" fill="url(#gBooks)"/><path d="M36 20C30 15 18 15 12 21V56c7-5 18-5 24 0zM38 20C44 15 56 15 62 21V56c-7-5-18-5-24 0z" fill="#fbf8f4"/></svg></div>
  <div class="app"><svg viewBox="0 0 74 74"><rect width="74" height="74" rx="17" fill="url(#gNumbers)"/><g fill="#fff"><rect x="14" y="48" width="9" height="15" rx="1.500"/><rect x="26" y="35" width="10" height="28" rx="1.500"/><rect x="39" y="11" width="9" height="52" rx="1.500"/><rect x="52" y="25" width="10" height="38" rx="1.500"/></g></svg></div>
  <div class="app"><svg viewBox="0 0 74 74"><rect width="74" height="74" rx="17" fill="#fdfdfd"/><g class="petals"><rect x="28" y="5" width="18" height="31" rx="9" fill="#f39b33"/><rect x="28" y="5" width="18" height="31" rx="9" fill="#e6da3c" transform="rotate(45 37 37)"/><rect x="28" y="5" width="18" height="31" rx="9" fill="#a9cc4b" transform="rotate(90 37 37)"/><rect x="28" y="5" width="18" height="31" rx="9" fill="#5fb98b" transform="rotate(135 37 37)"/><rect x="28" y="5" width="18" height="31" rx="9" fill="#5aa8e4" transform="rotate(180 37 37)"/><rect x="28" y="5" width="18" height="31" rx="9" fill="#8b7cc8" transform="rotate(225 37 37)"/><rect x="28" y="5" width="18" height="31" rx="9" fill="#c071b0" transform="rotate(270 37 37)"/><rect x="28" y="5" width="18" height="31" rx="9" fill="#ec6350" transform="rotate(315 37 37)"/></g></svg></div>
  <div class="app"><svg viewBox="0 0 74 74"><rect width="74" height="74" rx="17" fill="#f3f2ee"/><path d="M0 18V17A17 17 0 0 1 17 0H57A17 17 0 0 1 74 17V18z" fill="#f9cd46"/><path d="M0 19h74" stroke="#b8b5a8" stroke-width="2"/><path d="M0 37h74M0 55h74" stroke="#d3d3d3" stroke-width="1.500"/><path d="M2 22.500h70" stroke="#bbb" stroke-dasharray="1 2"/></svg></div>
  <div class="app"><svg viewBox="0 0 74 74"><rect width="74" height="74" rx="17" fill="#fbfbfb"/><path d="M0 23V17A17 17 0 0 1 17 0H57A17 17 0 0 1 74 17V23z" fill="#e9594f"/><text x="37" y="17.500" class="month">MAY</text><text x="36" y="62" class="day">1</text></svg></div>
  <div class="app"><svg viewBox="0 0 74 74"><rect width="74" height="74" rx="17" fill="#fbfbfb"/><path d="M28 18h38M28 37h38M28 56h38" stroke="#b4b4b8" stroke-width="1.600"/><g stroke-width="1.500" fill="none"><g stroke="#3e7df6"><circle cx="15" cy="18" r="6"/><circle cx="15" cy="18" r="3.800" fill="#3e7df6"/></g><g stroke="#eb4d3d"><circle cx="15" cy="37" r="6"/><circle cx="15" cy="37" r="3.800" fill="#eb4d3d"/></g><g stroke="#f19a37"><circle cx="15" cy="56" r="6"/><circle cx="15" cy="56" r="3.800" fill="#f19a37"/></g></g></svg></div>
  <div class="app"><svg viewBox="0 0 74 74"><path d="M70 12h7v14h-7z" fill="#b9bbbd"/><path d="M70 26h7v14h-7z" fill="#6fb4e0"/><path d="M70 40h7v12h-7z" fill="#f09a3c"/><path d="M70 52h7v12h-7z" fill="#69cc5c"/><rect width="74" height="74" rx="15" fill="#a9834c"/><circle cx="38" cy="37" r="23" fill="none" stroke="#86663a" stroke-width="1.800"/><ellipse cx="38" cy="32" rx="8" ry="9" fill="#8d6c3e"/><path d="M22 53a18 12 0 0 1 32 0 23 23 0 0 1-32 0z" fill="#8d6c3e"/></svg></div>
  <div class="app"><svg viewBox="0 0 74 74"><rect width="74" height="74" rx="17" fill="#cfd0d1"/><rect x="18" y="9" width="38" height="56" rx="5" fill="#26272a"/><rect x="22" y="13" width="30" height="13" rx="2" fill="#5a5b5f"/><g fill="#d8d8da"><circle cx="25.500" cy="34" r="4"/><circle cx="37" cy="34" r="4"/><circle cx="25.500" cy="45" r="4"/><circle cx="37" cy="45" r="4"/><rect x="21.500" y="53" width="19.500" height="8" rx="4"/></g><g fill="#f09437"><circle cx="48.500" cy="34" r="4"/><circle cx="48.500" cy="45" r="4"/><circle cx="48.500" cy="57" r="4"/></g></svg></div>
  <div class="app"><svg viewBox="0 0 74 74"><rect width="74" height="74" rx="17" fill="url(#gZoom)"/><text x="37" y="42.500" class="zm" textLength="53">zoom</text></svg></div>
  <div class="app run"><svg viewBox="0 0 74 74"><rect width="74" height="74" rx="17" fill="#fff"/><circle cx="36" cy="33" r="16.500" fill="#2263b6"/><circle cx="23" cy="40" r="15" fill="#3077cc"/><path d="M38 33a15 15 0 0 1 27 5c4 8 0 17-8 17H22z" fill="#3f93e2"/><path d="M10 49L33 35 64 54c-2 1-4 1.500-7 1.500H22c-5 0-9-2-12-6.500z" fill="#4ea2e8"/></svg></div>
  <i class="sep"></i>
  <div class="app trash"><svg viewBox="0 0 74 84"><path d="M4 7L14 75C15 84 59 84 60 75L70 7z" fill="url(#gTrash)"/><ellipse cx="37" cy="8" rx="33" ry="7.500" fill="#b3b4b6" stroke="#e8e9ea" stroke-width="1.500"/></svg></div>
</footer>
</body>
</html>
```
FILE: styles.css
```css
* { box-sizing: border-box; margin: 0; padding: 0; }
body {
  width: 3840px; height: 2160px; overflow: hidden; position: relative;
  display: flex; flex-direction: column;
  font-family: Inter, "Liberation Sans", sans-serif;
  background:
    linear-gradient(90deg, #1c4a9c 0 14px, #000 60px 626px, #b9bedd 628px, #5a6ba6 800px, #1d3264 1100px, #14264e 1700px, #2b4470 2400px, #8296b8 2600px, #000 2626px) 0 48px / 3840px 2px no-repeat,
    linear-gradient(#1c4a9c, #1c4a9c) 0 50px / 20px 20px no-repeat,
    linear-gradient(90deg, transparent 0 584px, #0a4f9c 584px 632px, #6aa5dd 634px 638px, #000 640px 680px, #5b8fc8 682px 688px, #050c26 690px, #04070f 1300px, #060d1c 1800px, #0b1730 2356px, #000 2360px 2664px, #d09468 2668px, #9db4d4 2690px, #2f5a7c 2740px, #0a1526 2850px, #000 3000px) 0 2030px / 3840px 6px no-repeat,
    linear-gradient(90deg, transparent 0 618px, #0c62d0 620px 638px, transparent 640px 680px, #6aa0e0 682px 686px, #071248 690px, #050e2c 900px, #040810 1300px, #060d1c 1700px, #0b1730 2400px, #000 2412px 2716px, #d09468 2720px, #9db4d4 2750px, #2f5a9c 2800px, #0c1a38 2900px, #000 3100px) 0 2150px / 3840px 10px no-repeat,
    #000;
}
.defs { position: absolute; }
b { font-weight: 600; }
i, em { font-style: normal; display: block; }

.menubar { height: 48px; display: flex; justify-content: space-between; align-items: center; color: #e9ebf0; font-size: 26px; line-height: 44px;
  background: linear-gradient(90deg, #1a2b4d 0, #192846 900px, #0e182c 1900px, #070b16 2700px, #030303 3000px); }
.menus { display: grid; grid-template-columns: 67px 80px 84px 88px 122px 130px 100px 137px 100px; padding-left: 40px; align-items: center; height: 44px; margin-top: -2px; letter-spacing: .1px; }
.menus b { font-weight: 700; }
.apple { width: 26px; height: 32px; }
.tray { display: grid; grid-template-columns: 81px 75px 68px 82px 72px 62px 74px 73px 72px 66px 66px 248px; padding-right: 40px; height: 46px; align-items: center; }
.tray svg { height: 32px; width: auto; justify-self: start; }
.clock { white-space: nowrap; letter-spacing: -.15px; margin-top: -3px; }
.petals { mix-blend-mode: multiply; opacity: .9; }

.window { margin-top: 2px; height: 1980px; border-radius: 20px; overflow: hidden; background: #e4e4e4; }
.titlebar { height: 80px; background: #f8f8f8; border-bottom: 4px solid #e1e1e1; display: flex; position: relative; color: #4b4b4b; font-size: 26px; }
.lights { display: flex; gap: 16px; padding: 26px 0 0 26px; }
.lights i { width: 24px; height: 24px; border-radius: 50%; }
.close { background: #ed6a5e; } .min { background: #f5bf4f; } .max { background: #61c554; }
.home { width: 32px; height: 30px; margin: 23px 0 0 40px; }
.tabs { display: grid; grid-template-columns: 92px 1fr 1fr; margin-left: 36px; height: 76px; line-height: 78px; color: #9e9e9e; font-size: 25.500px; }
.tabs .on { color: #4b4b4b; border-bottom: 3px solid #4b4b4b; text-align: center; }
.tabs span + span { padding-left: 35px; }
.tabs span + span + span { padding-left: 41px; }
.doc { position: absolute; left: 1749px; top: 0; height: 80px; display: flex; align-items: center; font-size: 25.500px; letter-spacing: .6px; }
.doc span { margin: 0 8px 0 14px; }
.actions { margin-left: auto; display: flex; align-items: center; height: 76px; }
.actions > svg { margin-right: 38px; }
.actions > svg + svg { margin-right: 49px; }
.actions > svg + svg + svg { margin-right: 38px; }
.zoomer { width: 116px; height: 51px; margin: 12px 36px 0 0; padding: 0 4px 4px 1px; border-bottom: 2px solid #e1e1e1; display: flex; justify-content: space-between; align-items: center; font-size: 23px; letter-spacing: -.2px; color: #5a5a5a; }

.work { display: flex; height: 1900px; position: relative; }
.work::after { content: ""; position: absolute; inset: auto 0 0 0; height: 90px; pointer-events: none;
  background: linear-gradient(rgba(0,0,0,0), rgba(0,0,0,.11));
  -webkit-mask-image: linear-gradient(90deg, transparent 60px, #000 280px, #000 3540px, transparent 3760px);
  mask-image: linear-gradient(90deg, transparent 60px, #000 280px, #000 3540px, transparent 3760px); }
.tools { width: 80px; background: #f8f8f8; display: flex; flex-direction: column; justify-content: space-between; padding: 26px 0 26px 22px; }
.toolset { display: grid; gap: 36px; }
.toolset svg { width: 36px; height: 36px; }

.canvas { flex: 1; display: flex; padding-left: 122px; gap: 49.600px; overflow: hidden; }
.board { width: 292.750px; flex: none; }
.board.first { margin-right: 17.700px; }
.slot { height: 625px; display: flex; flex-direction: column; justify-content: flex-end; align-items: flex-start; }
.note { background: #ff0; font: 13.100px/15.400px "Liberation Sans", sans-serif; color: #111; padding-left: 16px; white-space: nowrap; box-shadow: 0 5px 10px rgba(0,0,0,.3); }
.n1 { margin-left: 24px; width: 238px; height: 189px; padding-top: 7.500px; }
.n2 { margin-left: 35px; width: 231px; height: 80px; padding-top: 15.500px; }
.n3 { margin-left: 35px; width: 205px; height: 123px; padding-top: 15.500px; }
.n4 { margin-left: 33px; width: 231px; height: 128px; padding-top: 10.500px; }
.n5 { margin-left: 36px; width: 231px; height: 73px; padding-top: 15.500px; }
h2 { height: 63px; padding: 7px 0 0 6px; font-weight: 400; font-size: 21.500px; line-height: 56px; letter-spacing: .3px; color: #6e6e6e; }

.phone { position: relative; width: 292.750px; height: 629px; border: 2px solid #cdcdcd; background: #fff; display: flex; flex-direction: column; font-size: 12.900px; color: #111; overflow: hidden; }
.picked { border-color: #2277e0; }
.over { position: absolute; left: 0; top: 0; width: 288.750px; height: 625px; }
.head { flex: none; background: #f9f9f9; border-bottom: 1px solid #d4d4d6; display: flex; flex-direction: column; }
.h66 { height: 66px; border-color: #ededed; } .h67 { height: 67px; } .h68 { height: 68px; } .h82 { height: 83px; border-color: #f5f5f5; }
.h99 { height: 99px; border: 0; } .h107 { height: 107px; } .h136 { height: 137px; }
time { height: 34px; padding: 8px 0 0 24.500px; font-size: 10.800px; line-height: 20px; font-weight: 600; }
.bar { display: flex; align-items: center; flex: none; letter-spacing: -.1px; }
.b26 { height: 26px; margin-top: -1px; } .b30 { height: 30px; } .b32 { height: 32px; } .b34 { height: 34px; } .b42 { height: 42px; margin-top: 6px; }
.big { justify-content: center; font-size: 16.500px; font-weight: 600; }
.mid { justify-content: center; }
.split { justify-content: space-between; padding: 0 16px 0 11.500px; }
.split .act { padding-top: 2px; }
strong { font-size: 25.300px; letter-spacing: -.6px; font-weight: 700; white-space: nowrap; color: #000; }
.act, .bar span, .phone > a { color: #0a7aff; }
.tri { display: grid; grid-template-columns: 1fr auto 1fr; padding: 0 13px; }
.tri > :last-child { text-align: right; }
.h67 .tri > :last-child { padding-right: 2px; }
.h82 .tri > :last-child { padding-right: 3px; }
.head small { height: 26px; line-height: 26px; font-size: 10.100px; text-align: center; letter-spacing: -.1px; }
.field { margin: 7px 12px 0 13px; height: 27px; border-radius: 7px; background: #dfdfdf; }
.toggle-row { display: flex; justify-content: space-between; align-items: center; height: 35px; padding: 1.500px 12.500px 0; border-bottom: 1px solid #e4e4e4; }
.switch { width: 39px; height: 24px; border-radius: 12px; background: #4cd964; padding: 1.500px; }
.switch::after { content: ""; display: block; width: 21px; height: 21px; border-radius: 50%; background: #fff; margin-left: 15px; }
.list { list-style: none; padding-left: 11.500px; }
.list li { height: 33.900px; display: flex; align-items: center; justify-content: space-between; padding-right: 13px; padding-top: 2px; border-bottom: 1px solid #ececec; }
.list svg, .swipe svg { width: 7px; height: 12px; }
.list .full { margin-left: -11.500px; padding-left: 11.500px; }
.list .last { border: 0; }
.list .sel { background: #a0accd; margin-left: -11.500px; padding-left: 11.500px; border-color: #a0accd; }
.list li:first-child { border-color: #f0f0f0; }
.swipe { height: 34px; display: flex; align-items: center; }
.swipe em { width: 57px; height: 34px; background: #ff3b30; color: #fff; line-height: 35px; text-align: center; font-size: 12.500px; }
.detail { justify-content: flex-end; color: #8e8e93; border-bottom: 1px solid #ececec; }
.detail svg { margin: 0 11px 0 9px; }
.tag5 { justify-content: space-between; padding-left: 11.500px; }
.back { padding: 0 22px 0 6px; }
.back svg { width: 10px; height: 16px; margin-right: 5px; }
.back b { margin-left: auto; }
.large { height: 39px; line-height: 39px; padding-left: 11.500px; }
.tagrow { flex: none; height: 34.700px; background: #c9c8c7; color: #0a7aff; display: flex; justify-content: space-between; align-items: center; padding: 1px 20.500px 0 15.500px; }
.tagrow svg { width: 17px; height: 17px; }
.body { font: 15.400px/18.500px "Liberation Sans", sans-serif; color: #707070; padding-left: 15.500px; white-space: nowrap; }
.t20 { margin-top: 19.500px; } .t54 { margin-top: 54.500px; }
.phone > a { margin-top: auto; padding-bottom: 71px; line-height: 20px; text-align: center; }
.group { flex: none; height: 29.500px; padding-left: 12px; line-height: 31px; background: #efeff4; color: #8e8e93; position: relative; }
.found { font-size: 10.200px; line-height: 38px; }
.card { margin: 0 6px; padding: 11px 0 0 10px; box-shadow: 0 2px 5px rgba(0,0,0,.22); }
.c1 { height: 139.500px; } .c2 { height: 157px; padding-top: 15px; border-radius: 0 0 9px 9px; }
.state { margin: 63px 2px 0 0; text-align: center; font-size: 26.500px; line-height: 33px; font-weight: 600; color: #000; letter-spacing: .65px; white-space: nowrap; }
.bad { color: #f80404; } .alt { color: #fa0a22; }

.panel { width: 466px; background: #f8f8f8; }
.panel section { border-bottom: 4px solid #e3e3e3; padding: 0 32px 0 25px; }
.panel svg { flex: none; }
.panel .align { height: 96px; display: flex; padding: 0; }
.alignset { width: 234px; border-right: 2px solid #e3e3e3; display: flex; gap: 18px; align-items: center; padding: 0 0 0 30px; fill: #c0c0c0; }
.alignset.right { border: 0; width: 232px; gap: 17.500px; padding-left: 18px; }
.alignset svg { width: 32px; height: 32px; }
.repeat { height: 100px; display: flex; align-items: center; }
.repeat button { width: 203px; height: 48px; margin-left: -1px; border: 2px solid #dcdcdc; border-radius: 6px; background: #fbfbfb; display: flex; align-items: center; padding-left: 12px; gap: 18px; font: 400 22px Inter, sans-serif; letter-spacing: .3px; color: #a9a9a9; white-space: nowrap; }
.bools { display: flex; gap: 22px; margin-left: 27px; stroke: #c0c0c0; stroke-width: 2; }
.bools svg { width: 28px; height: 28px; }
h3 { display: flex; align-items: center; gap: 14px; font-weight: 400; font-size: 18px; letter-spacing: 2.600px; color: #8a8a8a; line-height: 20px; }
h3 svg { width: 20px; height: 20px; }
.component { height: 80px; display: flex; justify-content: space-between; align-items: center; }
.transform { height: 244px; }
.transform h3 { padding-top: 28px; }
.fields { display: flex; margin-top: 34px; }
.pair { display: grid; grid-template-columns: 27px 88px; row-gap: 27px; align-items: center; font-size: 22px; color: #c0c0c0; }
.pair span { height: 45px; line-height: 35px; border-bottom: 2px solid #e1e1e1; padding-left: 4px; }
.pair label { font-size: 19px; color: #9e9e9e; padding-bottom: 9px; }
.pair.dark { grid-template-columns: 22px 88px; margin-left: 19px; }
.pair.dark label { color: #8a8a8a; }
.lock { width: 18px; height: 78px; margin: 9px 0 0 4px; }
.layout { height: 152px; }
.layout h3 { padding-top: 28px; }
.resp { display: flex; justify-content: space-between; align-items: center; margin-top: 48px; padding-right: 4px; font-size: 22.500px; letter-spacing: .2px; color: #a9a9a9; height: 28px; }
.resp i { width: 52px; height: 28px; border-radius: 14px; background: #c3c3c3; padding: 4px; }
.resp i::after { content: ""; display: block; width: 20px; height: 20px; border-radius: 50%; background: #fafafa; margin-left: 24px; }
.look { height: 168px; }
.look h3 { padding-top: 25px; }
.opacity { display: flex; align-items: center; margin-top: 38px; padding-left: 1px; height: 50px; }
.opacity span { width: 72px; height: 46px; border-bottom: 2px solid #dcdcdc; margin-left: 16px; line-height: 46px; font-size: 22px; color: #a8a8a8; }
.slider { margin-left: 20px; width: 280px; flex: none; height: 6px; border-radius: 3px; background: #ebebeb; }
.slider i { width: 28px; height: 28px; margin-top: -11px; border-radius: 50%; background: #fdfdfd; box-shadow: 0 1px 3px rgba(0,0,0,.25); }

.dock { width: 3607px; height: 114px; margin: 6px 0 0 117px; border: 2px solid #77787a; border-radius: 28px; display: flex; align-items: center; padding: 0 0 6px 3px; flex: none;
  background: linear-gradient(90deg, #555557 0, #545454 350px, #5b6b8c 520px, #585d84 700px, #565c70 1000px, #575a62 1400px, #57585c 1800px, #5d6374 2180px, #5f6577 2300px, #555454 2420px, #5c5b5b 2490px, #8495b0 2610px, #7c95bf 2660px, #566680 2800px, #555a6c 3000px, #545457 3250px, #545456); }
.app { width: 96px; flex: none; height: 74px; display: flex; justify-content: center; position: relative; }
.app svg { width: 74px; height: 74px; overflow: visible; }
.run::after { content: ""; position: absolute; bottom: -19px; width: 8px; height: 8px; border-radius: 50%; background: #000; }
.sep { width: 2px; height: 82px; background: #2b2b2d; margin-left: 22px; }
.trash { margin-left: 20px; width: 98px; align-items: center; }
.trash svg { height: 84px; }
.ms { font: 700 18px Inter, sans-serif; fill: #fff; text-anchor: middle; }
.adobe { font: 700 41px "Open Sans", sans-serif; text-anchor: middle; }
.month { font: 600 15px Inter, sans-serif; fill: #fff; text-anchor: middle; }
.day { font: 300 44px Inter, sans-serif; fill: #222; text-anchor: middle; }
.zm { font: 600 19px Inter, sans-serif; fill: #fff; text-anchor: middle; }
```
